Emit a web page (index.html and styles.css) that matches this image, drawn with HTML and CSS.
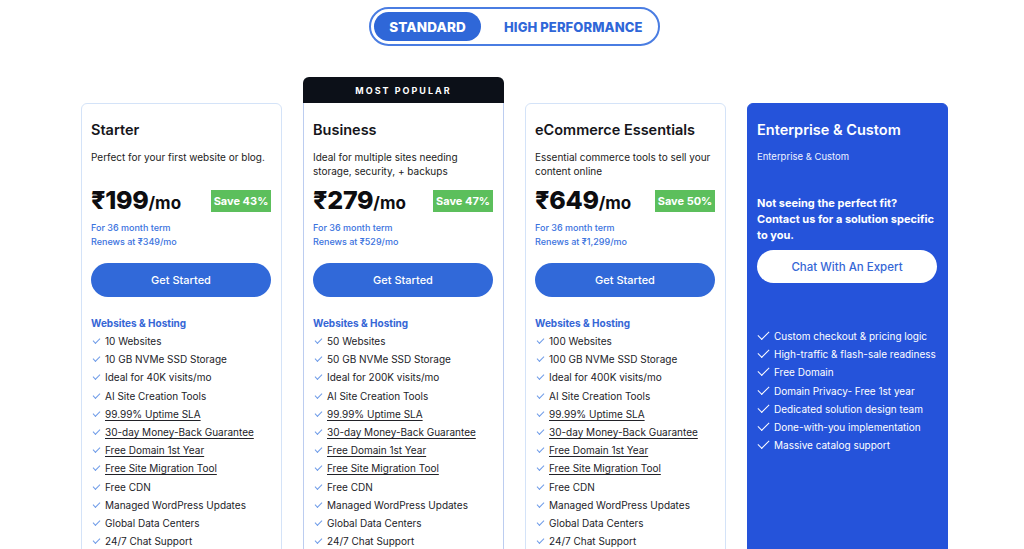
FILE: index.html
```html
<!DOCTYPE html>
<html lang="en">
<head>
<meta charset="utf-8">
<title>Plans</title>
<link rel="stylesheet" href="styles.css">
</head>
<body>
<div class="page">
  <div class="toggle-wrap">
    <div class="toggle">
      <span class="tab active">STANDARD</span>
      <span class="tab">HIGH PERFORMANCE</span>
    </div>
  </div>

  <div class="plans">
    <div class="card">
      <h3 class="title">Starter</h3>
      <p class="desc">Perfect for your first website or blog.</p>
      <div class="price-row">
        <div class="price">₹199<span class="per">/mo</span></div>
        <span class="save">Save 43%</span>
      </div>
      <p class="term">For 36 month term<br>Renews at ₹349/mo</p>
      <a class="btn">Get Started</a>
      <div class="group">Websites &amp; Hosting</div>
      <ul class="feats">
        <li>10 Websites</li>
        <li>10 GB NVMe SSD Storage</li>
        <li>Ideal for 40K visits/mo</li>
        <li>AI Site Creation Tools</li>
        <li><u>99.99% Uptime SLA</u></li>
        <li><u>30-day Money-Back Guarantee</u></li>
        <li><u>Free Domain 1st Year</u></li>
        <li><u>Free Site Migration Tool</u></li>
        <li>Free CDN</li>
        <li>Managed WordPress Updates</li>
        <li>Global Data Centers</li>
        <li>24/7 Chat Support</li>
      </ul>
    </div>

    <div class="popular-wrap">
      <div class="badge">MOST POPULAR</div>
      <div class="card popular">
        <h3 class="title">Business</h3>
        <p class="desc">Ideal for multiple sites needing storage, security, + backups</p>
        <div class="price-row">
          <div class="price">₹279<span class="per">/mo</span></div>
          <span class="save">Save 47%</span>
        </div>
        <p class="term">For 36 month term<br>Renews at ₹529/mo</p>
        <a class="btn">Get Started</a>
        <div class="group">Websites &amp; Hosting</div>
        <ul class="feats">
          <li>50 Websites</li>
          <li>50 GB NVMe SSD Storage</li>
          <li>Ideal for 200K visits/mo</li>
          <li>AI Site Creation Tools</li>
          <li><u>99.99% Uptime SLA</u></li>
          <li><u>30-day Money-Back Guarantee</u></li>
          <li><u>Free Domain 1st Year</u></li>
          <li><u>Free Site Migration Tool</u></li>
          <li>Free CDN</li>
          <li>Managed WordPress Updates</li>
          <li>Global Data Centers</li>
          <li>24/7 Chat Support</li>
        </ul>
      </div>
    </div>

    <div class="card">
      <h3 class="title">eCommerce Essentials</h3>
      <p class="desc">Essential commerce tools to sell your content online</p>
      <div class="price-row">
        <div class="price">₹649<span class="per">/mo</span></div>
        <span class="save">Save 50%</span>
      </div>
      <p class="term">For 36 month term<br>Renews at ₹1,299/mo</p>
      <a class="btn">Get Started</a>
      <div class="group">Websites &amp; Hosting</div>
      <ul class="feats">
        <li>100 Websites</li>
        <li>100 GB NVMe SSD Storage</li>
        <li>Ideal for 400K visits/mo</li>
        <li>AI Site Creation Tools</li>
        <li><u>99.99% Uptime SLA</u></li>
        <li><u>30-day Money-Back Guarantee</u></li>
        <li><u>Free Domain 1st Year</u></li>
        <li><u>Free Site Migration Tool</u></li>
        <li>Free CDN</li>
        <li>Managed WordPress Updates</li>
        <li>Global Data Centers</li>
        <li>24/7 Chat Support</li>
      </ul>
    </div>

    <div class="card enterprise">
      <h3 class="title">Enterprise &amp; Custom</h3>
      <p class="desc ent-desc">Enterprise &amp; Custom</p>
      <p class="pitch">Not seeing the perfect fit? Contact us for a solution specific to you.</p>
      <a class="btn btn-white">Chat With An Expert</a>
      <ul class="feats ent-feats">
        <li>Custom checkout &amp; pricing logic</li>
        <li>High-traffic &amp; flash-sale readiness</li>
        <li>Free Domain</li>
        <li>Domain Privacy- Free 1st year</li>
        <li>Dedicated solution design team</li>
        <li>Done-with-you implementation</li>
        <li>Massive catalog support</li>
      </ul>
    </div>
  </div>
</div>
</body>
</html>
```

FILE: styles.css
```css
* { box-sizing: border-box; }

body {
  margin: 0;
  background: #ffffff;
  font-family: "Inter", "Noto Sans", sans-serif;
  color: #1b1b1f;
}

.page {
  padding-left: 5px;
}

.toggle-wrap {
  display: flex;
  justify-content: center;
  padding-top: 7px;
}

.toggle {
  display: flex;
  align-items: center;
  width: 291px;
  height: 39px;
  border: 2px solid #4a7de2;
  border-radius: 999px;
  padding: 0 3px;
}

.tab {
  font-size: 13px;
  font-weight: 800;
  color: #2f67d8;
  letter-spacing: 0.1px;
  white-space: nowrap;
}

.tab.active {
  background: #2f67d8;
  color: #ffffff;
  width: 107px;
  height: 29px;
  border-radius: 999px;
  display: flex;
  align-items: center;
  justify-content: center;
  margin-right: 23px;
  font-size: 13.5px;
}

.plans {
  display: flex;
  justify-content: center;
  align-items: stretch;
  gap: 21px;
  margin-top: 57px;
}

.card {
  width: 201px;
  border: 1px solid #d4e3f8;
  border-radius: 6px;
  padding: 17px 10px 40px 9px;
  min-height: 520px;
  background: #ffffff;
}

.popular-wrap {
  width: 201px;
  margin-top: -26px;
  display: flex;
  flex-direction: column;
}

.badge {
  height: 26px;
  background: #0c1018;
  color: #ffffff;
  border-radius: 6px 6px 0 0;
  font-size: 9px;
  font-weight: 700;
  letter-spacing: 2px;
  display: flex;
  align-items: center;
  justify-content: center;
}

.card.popular {
  border-color: #bccdf0;
  border-top: 0;
  border-radius: 0 0 6px 6px;
  padding-top: 18px;
  flex: 1;
}

.title {
  margin: 0;
  font-size: 14.5px;
  line-height: 18px;
  font-weight: 600;
  color: #15151a;
}

.desc {
  margin: 11px 0 0;
  font-size: 10px;
  line-height: 14px;
  min-height: 28px;
  color: #222;
}

.price-row {
  display: flex;
  align-items: center;
  justify-content: space-between;
  margin-top: 10px;
  height: 26px;
}

.price {
  font-size: 25px;
  font-weight: 800;
  letter-spacing: -0.3px;
  color: #0d0d10;
  line-height: 26px;
}

.per {
  font-size: 17px;
  font-weight: 700;
  letter-spacing: 0;
}

.save {
  background: #5cbf5c;
  color: #ffffff;
  font-size: 11px;
  font-weight: 700;
  width: 60px;
  height: 22px;
  display: flex;
  align-items: center;
  justify-content: center;
}

.term {
  margin: 7px 0 0;
  font-size: 9px;
  line-height: 14px;
  font-weight: 500;
  color: #3a72de;
}

.btn {
  display: flex;
  align-items: center;
  justify-content: center;
  height: 34px;
  margin-top: 14px;
  border-radius: 999px;
  background: #3169d9;
  color: #ffffff;
  font-size: 11px;
  font-weight: 500;
}

.group {
  margin-top: 20px;
  font-size: 10px;
  line-height: 12px;
  font-weight: 700;
  color: #3566d6;
}

.feats {
  list-style: none;
  margin: 3px 0 0;
  padding: 0;
}

.feats li {
  position: relative;
  padding-left: 14px;
  font-size: 10px;
  line-height: 18.2px;
  color: #222228;
  white-space: nowrap;
}

.feats li::before {
  content: "";
  position: absolute;
  left: 2px;
  top: 6px;
  width: 6px;
  height: 3px;
  border-left: 1.2px solid #6f9ce8;
  border-bottom: 1.2px solid #6f9ce8;
  transform: rotate(-45deg);
}

.feats u {
  text-decoration-thickness: 1px;
  text-underline-offset: 2px;
}

.card.enterprise {
  background: #2553da;
  border-color: #2553da;
  color: #ffffff;
}

.enterprise .title { color: #ffffff; }

.ent-desc {
  color: #eef2ff;
  font-size: 9.5px;
  min-height: 0;
}

.pitch {
  margin: 31px 0 0;
  font-size: 11px;
  line-height: 16px;
  font-weight: 700;
  color: #ffffff;
}

.btn-white {
  background: #ffffff;
  color: #3566d6;
  font-size: 11.5px;
  height: 33px;
  margin-top: 7px;
}

.ent-feats {
  margin-top: 44px;
}

.ent-feats li {
  color: #ffffff;
  padding-left: 17px;
}

.ent-feats li::before {
  left: 1px;
  top: 4px;
  width: 10px;
  height: 5px;
  border-left: 1.8px solid #ffffff;
  border-bottom: 1.8px solid #ffffff;
}
```
